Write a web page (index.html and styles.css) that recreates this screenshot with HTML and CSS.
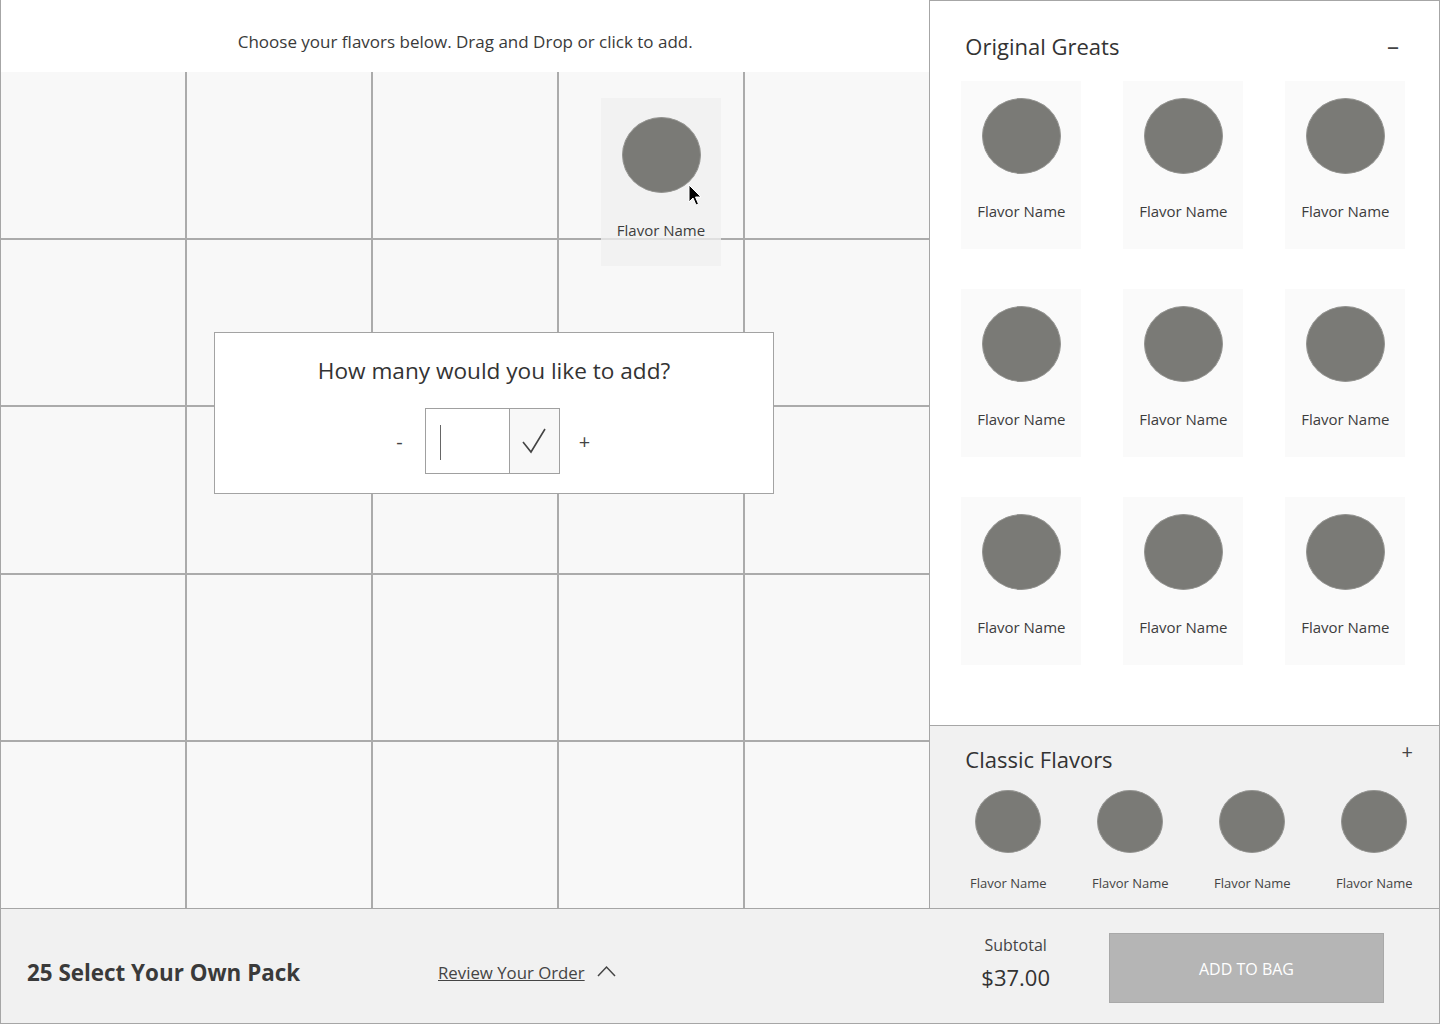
FILE: index.html
```html
<!DOCTYPE html>
<html lang="en">
<head>
	<meta charset="UTF-8">
	<title>Select Your Own Pack</title>
	<link rel="stylesheet" href="styles.css">
</head>
<body>
	<div class="page">
		<div class="main">
			<div class="board">
				<div class="board-head">Choose your flavors below. Drag and Drop or click to add.</div>
				<div class="slots">
					<div class="slot"></div><div class="slot"></div><div class="slot"></div><div class="slot"></div><div class="slot"></div>
					<div class="slot"></div><div class="slot"></div><div class="slot"></div><div class="slot"></div><div class="slot"></div>
					<div class="slot"></div><div class="slot"></div><div class="slot"></div><div class="slot"></div><div class="slot"></div>
					<div class="slot"></div><div class="slot"></div><div class="slot"></div><div class="slot"></div><div class="slot"></div>
					<div class="slot"></div><div class="slot"></div><div class="slot"></div><div class="slot"></div><div class="slot"></div>
				</div>

				<!-- card being dragged -->
				<div class="flavor dragging">
					<span class="dot"></span>
					<span class="name">Flavor Name</span>
				</div>
				<svg class="pointer" width="16" height="24" viewBox="0 0 16 24">
					<path d="M1 1 L1 18 L5 14 L8 21 L10.5 20 L7.5 13 L13 13 Z" fill="#000" stroke="#fff" stroke-width="1"/>
				</svg>

				<div class="qty-box">
					<p class="qty-title">How many would you like to add?</p>
					<div class="qty-row">
						<span class="qty-btn">-</span>
						<div class="qty-field">
							<div class="qty-input"><span class="caret"></span></div>
							<div class="qty-ok">
								<svg width="26" height="28" viewBox="0 0 26 28">
									<polyline points="2,15 10,25 24,2" fill="none" stroke="#444" stroke-width="1.6"/>
								</svg>
							</div>
						</div>
						<span class="qty-btn">+</span>
					</div>
				</div>
			</div>

			<div class="side">
				<div class="group">
					<div class="group-head">
						<h3>Original Greats</h3>
						<span class="toggle">&ndash;</span>
					</div>
					<div class="cards">
						<div class="flavor"><span class="dot"></span><span class="name">Flavor Name</span></div>
						<div class="flavor"><span class="dot"></span><span class="name">Flavor Name</span></div>
						<div class="flavor"><span class="dot"></span><span class="name">Flavor Name</span></div>
						<div class="flavor"><span class="dot"></span><span class="name">Flavor Name</span></div>
						<div class="flavor"><span class="dot"></span><span class="name">Flavor Name</span></div>
						<div class="flavor"><span class="dot"></span><span class="name">Flavor Name</span></div>
						<div class="flavor"><span class="dot"></span><span class="name">Flavor Name</span></div>
						<div class="flavor"><span class="dot"></span><span class="name">Flavor Name</span></div>
						<div class="flavor"><span class="dot"></span><span class="name">Flavor Name</span></div>
					</div>
				</div>
				<div class="group closed">
					<div class="group-head">
						<h3>Classic Flavors</h3>
						<span class="toggle">+</span>
					</div>
					<div class="mini-row">
						<div class="mini"><span class="dot"></span><span class="name">Flavor Name</span></div>
						<div class="mini"><span class="dot"></span><span class="name">Flavor Name</span></div>
						<div class="mini"><span class="dot"></span><span class="name">Flavor Name</span></div>
						<div class="mini"><span class="dot"></span><span class="name">Flavor Name</span></div>
					</div>
				</div>
			</div>
		</div>

		<div class="footer">
			<div class="pack">25 Select Your Own Pack</div>
			<a href="##" class="review"><span>Review Your Order</span>
				<svg width="19" height="12" viewBox="0 0 19 12"><polyline points="1,11 9.5,2 18,11" fill="none" stroke="#444" stroke-width="1.5"/></svg>
			</a>
			<div class="total">
				<span class="total-label">Subtotal</span>
				<span class="total-price">$37.00</span>
			</div>
			<a href="##" class="add-bag">ADD TO BAG</a>
		</div>
	</div>
</body>
</html>
```

FILE: styles.css
```css
*{
	margin: 0;
	padding: 0;
	box-sizing: border-box;
}
body{
	font-family: 'Open Sans', 'Liberation Sans', sans-serif;
	color: #3a3a3a;
	background-color: #fff;
}
.page{
	width: 1440px;
	height: 1024px;
	display: flex;
	flex-direction: column;
	border-left: 1px solid #a6a6a6;
}
.main{
	display: flex;
	height: 908px;
}
.board{
	position: relative;
	width: 929px;
	display: flex;
	flex-direction: column;
}
.board-head{
	height: 72px;
	line-height: 84px;
	text-align: center;
	font-size: 17px;
	background-color: #fff;
}
.slots{
	flex: 1;
	display: grid;
	grid-template-columns: repeat(5, 1fr);
	grid-template-rows: repeat(5, 1fr);
	gap: 2px;
	background-color: #ababab;
}
.slot{
	background-color: #f8f8f8;
}

/* flavor card */
.flavor{
	display: flex;
	flex-direction: column;
	align-items: center;
	width: 120px;
	height: 168px;
	padding-top: 17px;
	background-color: #fafafa;
}
.dot{
	display: block;
	width: 79px;
	height: 76px;
	border-radius: 50%;
	background-color: #7a7a76;
	border: 1px solid #949491;
}
.flavor .name{
	margin-top: 27px;
	font-size: 15px;
	color: #3d3d3d;
}
.dragging{
	position: absolute;
	left: 600px;
	top: 98px;
	background-color: rgba(240,240,240,.75);
	padding-top: 19px;
}
.dragging .name{
	margin-top: 27px;
}
.pointer{
	position: absolute;
	left: 687px;
	top: 184px;
}

/* quantity popup */
.qty-box{
	position: absolute;
	left: 213px;
	top: 332px;
	width: 560px;
	height: 162px;
	background-color: #fff;
	border: 1px solid #a3a3a3;
	text-align: center;
}
.qty-title{
	font-size: 22.6px;
	margin-top: 22px;
	color: #333;
}
.qty-row{
	display: flex;
	justify-content: center;
	align-items: center;
	margin-top: 22px;
}
.qty-btn{
	width: 50px;
	font-size: 20px;
	color: #444;
	text-align: center;
}
.qty-btn:first-child{
	margin-left: -4px;
}
.qty-field{
	display: flex;
	width: 135px;
	height: 66px;
	border: 1px solid #a0a0a0;
}
.qty-input{
	width: 84px;
	border-right: 1px solid #a0a0a0;
	padding: 16px 0 0 14px;
	text-align: left;
}
.caret{
	display: block;
	width: 1px;
	height: 35px;
	background-color: #666;
}
.qty-ok{
	flex: 1;
	background-color: #f8f8f8;
	display: flex;
	align-items: center;
	justify-content: center;
}

/* side panel */
.side{
	width: 511px;
	border: 1px solid #a6a6a6;
	border-bottom: none;
	display: flex;
	flex-direction: column;
}
.group{
	flex: 1;
	padding: 28px 32px 0 31px;
}
.group-head{
	display: flex;
	justify-content: space-between;
	align-items: center;
	padding: 0 8px 0 4px;
}
.group-head h3{
	font-size: 22px;
	font-weight: normal;
	color: #333;
}
.toggle{
	font-size: 24px;
	color: #444;
}
.cards{
	display: grid;
	grid-template-columns: repeat(3, 120px);
	column-gap: 42px;
	row-gap: 40px;
	margin-top: 19px;
}
.closed{
	flex: none;
	height: 183px;
	background-color: #f1f1f1;
	border-top: 1px solid #a6a6a6;
	padding: 18px 2px 0 17px;
}
.closed .group-head{
	align-items: flex-start;
	padding: 0 24px 0 18px;
}
.closed .toggle{
	font-size: 20px;
	margin-top: -6px;
}
.mini-row{
	display: flex;
	margin-top: 16px;
}
.mini{
	width: 122px;
	display: flex;
	flex-direction: column;
	align-items: center;
}
.mini .dot{
	width: 66px;
	height: 63px;
}
.mini .name{
	margin-top: 21px;
	font-size: 13px;
	color: #444;
}

/* footer */
.footer{
	flex: 1;
	display: flex;
	align-items: center;
	background-color: #f1f1f1;
	border-top: 1px solid #a6a6a6;
	border-bottom: 1px solid #a6a6a6;
	border-right: 1px solid #a6a6a6;
	padding: 12px 55px 0 26px;
}
.pack{
	font-size: 22.4px;
	font-weight: bold;
	color: #3a3a3a;
	width: 411px;
}
.review{
	font-size: 16.8px;
	color: #444;
	display: flex;
	align-items: center;
	gap: 12px;
	text-decoration: none;
}
.review span{
	text-decoration: underline;
}
.review svg{
	margin-top: -3px;
}
.total{
	margin-left: auto;
	margin-right: 59px;
	margin-top: -18px;
	display: flex;
	flex-direction: column;
	align-items: center;
	gap: 6px;
}
.total-label{
	font-size: 16px;
	color: #444;
}
.total-price{
	font-size: 22px;
	color: #333;
}
.add-bag{
	display: block;
	width: 275px;
	height: 70px;
	line-height: 70px;
	margin-top: -9px;
	text-align: center;
	background-color: #b5b5b5;
	border: 1px solid #a9a9a9;
	color: #fff;
	font-size: 16px;
	text-decoration: none;
}
```
